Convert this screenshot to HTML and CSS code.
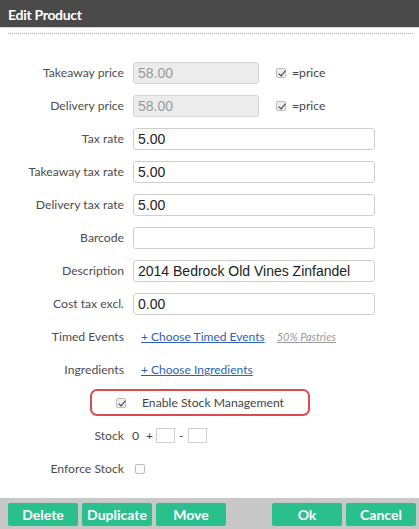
FILE: index.html
```html
<!DOCTYPE html>
<html>
<head>
<meta charset="utf-8">
<link rel="stylesheet" href="styles.css">
</head>
<body>
<div class="dialog">
  <div class="header">Edit Product</div>
  <div class="sep"></div>
  <div class="form">
    <label class="lbl">Takeaway price</label>
    <div class="field">
      <span class="input short disabled">58.00</span>
      <span class="eq"><span class="cb checked"></span>=price</span>
    </div>

    <label class="lbl">Delivery price</label>
    <div class="field">
      <span class="input short disabled">58.00</span>
      <span class="eq"><span class="cb checked"></span>=price</span>
    </div>

    <label class="lbl">Tax rate</label>
    <div class="field"><span class="input">5.00</span></div>

    <label class="lbl">Takeaway tax rate</label>
    <div class="field"><span class="input">5.00</span></div>

    <label class="lbl">Delivery tax rate</label>
    <div class="field"><span class="input">5.00</span></div>

    <label class="lbl">Barcode</label>
    <div class="field"><span class="input"></span></div>

    <label class="lbl">Description</label>
    <div class="field"><span class="input">2014 Bedrock Old Vines Zinfandel</span></div>

    <label class="lbl">Cost tax excl.</label>
    <div class="field"><span class="input">0.00</span></div>

    <label class="lbl">Timed Events</label>
    <div class="field links"><a class="link">+ Choose Timed Events</a><a class="tag">50% Pastries</a></div>

    <label class="lbl">Ingredients</label>
    <div class="field links"><a class="link">+ Choose Ingredients</a></div>

    <div class="full">
      <div class="stockbox"><span class="cb checked"></span><span>Enable Stock Management</span></div>
    </div>

    <label class="lbl">Stock</label>
    <div class="field stock"><span class="zero">0</span><span class="op plus">+</span><span class="mini"></span><span class="op minus">-</span><span class="mini"></span></div>

    <label class="lbl">Enforce Stock</label>
    <div class="field"><span class="cb enforce"></span></div>
  </div>
  <div class="footer">
    <button class="btn">Delete</button>
    <button class="btn">Duplicate</button>
    <button class="btn">Move</button>
    <span class="spacer"></span>
    <button class="btn">Ok</button>
    <button class="btn">Cancel</button>
  </div>
</div>
</body>
</html>
```

FILE: styles.css
```css
* { box-sizing: border-box; }
html, body { margin: 0; padding: 0; background: #fff; }
body { font-family: Lato, "Open Sans", sans-serif; color: #4f4f4f; }

.dialog { width: 419px; height: 529px; display: flex; flex-direction: column; overflow: hidden; }

.header {
  height: 28px;
  background: #4a4a4a;
  color: #fff;
  font-weight: 700;
  font-size: 14px;
  letter-spacing: -0.3px;
  line-height: 30px;
  padding-left: 8px;
  border-bottom: 1px solid #d8d8d8;
}

.sep {
  margin: 5px 6px 0 8px;
  border-top: 1px dotted #b0b0b0;
}

.form {
  display: grid;
  grid-template-columns: 124px 1fr;
  column-gap: 9px;
  grid-auto-rows: 33px;
  align-items: center;
  padding-top: 22px;
}

.lbl { text-align: right; font-size: 12.2px; color: #4d4d4d; }

.field { display: flex; align-items: center; }

.input {
  display: block;
  width: 242px;
  height: 22px;
  border: 1px solid #cfcfcf;
  border-radius: 3px;
  background: #fff;
  font-family: "Liberation Sans", Arial, sans-serif;
  font-size: 14px;
  line-height: 20px;
  padding-left: 4px;
  color: #222;
}
.input.short { width: 126px; }
.input.disabled { background: #ececec; color: #9a9a9a; border-color: #d4d4d4; }

.eq { display: flex; align-items: center; margin-left: 17px; font-size: 12.2px; color: #444; }
.eq .cb { margin-right: 6px; }

.cb {
  display: inline-block;
  width: 10px;
  height: 10px;
  border: 1px solid #bdbdbd;
  border-radius: 2px;
  background: #eeeeee;
  position: relative;
  flex: none;
}
.cb.checked::after {
  content: "";
  position: absolute;
  left: 2.5px;
  top: 0px;
  width: 3px;
  height: 6px;
  border: solid #333;
  border-width: 0 1.6px 1.6px 0;
  transform: rotate(40deg);
}
.cb.enforce { margin-left: 2px; background: #fafafa; }

.links { padding-left: 8px; }
.link { color: #2d5fbd; text-decoration: underline; font-size: 12px; }
.tag { color: #9a9a9a; font-style: italic; text-decoration: underline; font-size: 11px; margin-left: 12px; }

.full { grid-column: 1 / -1; }
.stockbox {
  margin-left: 90px;
  width: 220px;
  height: 27px;
  border: 2px solid #db4b50;
  border-radius: 7px;
  display: flex;
  align-items: center;
  padding-left: 24px;
  font-size: 12.2px;
  color: #444;
}
.stockbox .cb { margin-right: 16px; }

.stock { font-size: 12.2px; color: #444; }
.zero { margin-left: -1px; }
.op { font-size: 12px; }
.plus { margin: 0 3px 0 7px; }
.minus { margin: 0 4px 0 4px; }
.mini {
  display: inline-block;
  width: 19px;
  height: 15px;
  border: 1px solid #d0d0d0;
  background: #fff;
}

.footer {
  margin-top: auto;
  height: 31px;
  background: #c8c8c8;
  display: flex;
  align-items: flex-start;
  gap: 4px;
  padding: 5px 3px 0 8px;
}
.spacer { flex: 1; }
.btn {
  width: 70px;
  height: 23px;
  border: 0;
  border-radius: 2px;
  background: #2ac08e;
  color: #fff;
  font-family: Lato, sans-serif;
  font-weight: 700;
  font-size: 14px;
  padding: 0;
  line-height: 23px;
}
```
